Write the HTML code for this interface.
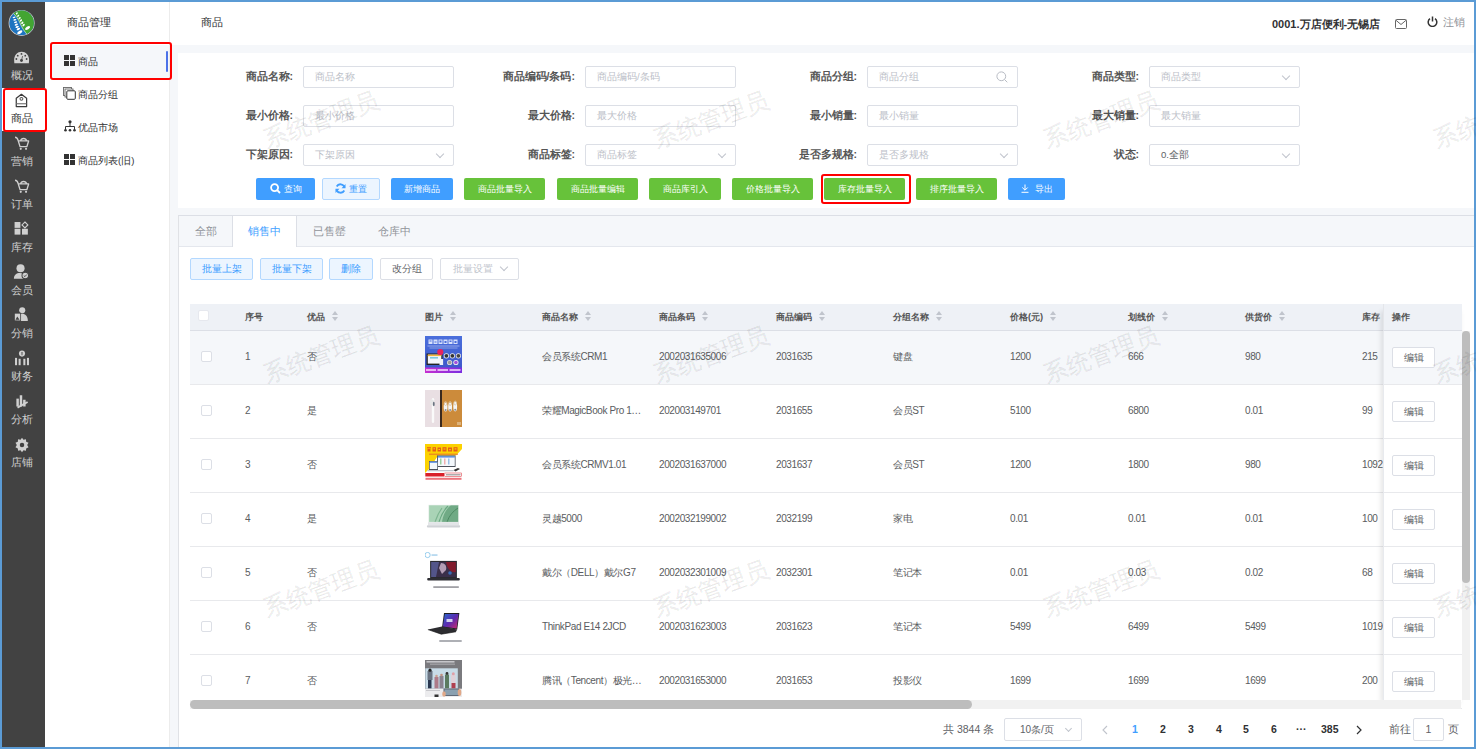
<!DOCTYPE html>
<html><head><meta charset="utf-8"><style>
*{box-sizing:border-box;margin:0;padding:0}
html,body{width:1476px;height:749px;overflow:hidden}
body{font-family:"Liberation Sans",sans-serif;color:#606266;position:relative;background:#5b9bd5}
.a{position:absolute}
.t{position:absolute;white-space:nowrap}
.mi{position:absolute;left:2px;width:43px;height:43px;color:#d0d0d0;font-size:11px;text-align:center}
.mi .tx{position:absolute;left:-2px;width:43px;top:24px;line-height:13px;font-weight:500}
.mi svg{position:absolute;left:11px;top:4px}
.mi.on{background:#fff;color:#333}
.lbl{position:absolute;font-size:10.5px;font-weight:bold;color:#555;text-align:right;line-height:20px;white-space:nowrap}
.inp{position:absolute;width:151px;height:22px;border:1px solid #dcdfe6;border-radius:2px;background:#fff;font-size:9.6px;color:#bcc0c8;line-height:20px;padding-left:11px;white-space:nowrap}
.inp .arr{position:absolute;right:10px;top:6px;width:6px;height:6px;border-right:1px solid #c0c4cc;border-bottom:1px solid #c0c4cc;transform:rotate(45deg)}
.btn{position:absolute;top:178px;height:22px;border-radius:2px;font-size:9.4px;font-weight:500;color:#fff;text-align:center;line-height:22px;white-space:nowrap}
.g{background:#67c23a}
.b{background:#409eff}
.tab{position:absolute;top:216px;height:30px;font-size:11px;color:#909399;line-height:30px;text-align:center}
.tb{position:absolute;top:258px;height:22px;border-radius:2px;font-size:9.6px;line-height:20px;text-align:center;white-space:nowrap}
.tb.p{background:#ecf5ff;border:1px solid #b3d8ff;color:#409eff}
.tb.w{background:#fff;border:1px solid #dcdfe6;color:#606266}
.hc{position:absolute;top:304px;line-height:26px;font-size:9.2px;font-weight:600;color:#555;white-space:nowrap}
.c{position:absolute;font-size:10px;letter-spacing:-0.4px;color:#5a5c60;white-space:nowrap;line-height:14px}
.cb{position:absolute;width:11px;height:11px;border:1px solid #dcdfe6;border-radius:2px;background:#fff}
.sort{display:inline-block;vertical-align:middle;margin-left:7px;width:7px;height:11px;position:relative;top:-1px}
.sort:before{content:"";position:absolute;left:0;top:0;border-left:3.5px solid transparent;border-right:3.5px solid transparent;border-bottom:4px solid #c0c4cc}
.sort:after{content:"";position:absolute;left:0;top:6px;border-left:3.5px solid transparent;border-right:3.5px solid transparent;border-top:4px solid #c0c4cc}
.wm{position:absolute;width:0;height:0}.wm span{position:absolute;left:0;top:0;font-size:24px;line-height:28px;color:rgba(0,0,0,0.065);-webkit-text-stroke:0.9px rgba(0,0,0,0.045);transform:translate(-50%,-50%) rotate(-20deg);white-space:nowrap}
.ed{position:absolute;left:1392px;width:43px;height:21px;border:1px solid #dcdfe6;border-radius:2px;background:#fff;font-size:9.6px;color:#606266;line-height:19px;text-align:center}
.pg{position:absolute;top:722px;font-size:10.5px;font-weight:bold;color:#303133;line-height:14px;white-space:nowrap;text-align:center}
</style></head><body>
<div class="a" style="left:2px;top:2px;width:1472px;height:745px;background:#f5f7fa"></div>
<div class="a" style="left:2px;top:2px;width:43px;height:745px;background:#424242"></div>
<svg class="a" style="left:6px;top:7px" width="32" height="32" viewBox="0 0 32 32">
<circle cx="15.6" cy="15.9" r="13" fill="#d8d4d4"/>
<clipPath id="lc"><circle cx="15.6" cy="15.9" r="12.3"/></clipPath>
<g clip-path="url(#lc)">
<rect x="0" y="0" width="32" height="32" fill="#1d74c0"/>
<path d="M6.5 5.5 C 10 9, 12.5 12, 14 16 C 16 21, 18.5 24.5, 22 28.5 L 32 32 L 32 0 L 0 0 Z" fill="#43a532"/>
<path d="M6.5 5.5 C 10 9, 12.5 12, 14 16 C 16 21, 18.5 24.5, 22 28.5" fill="none" stroke="#cfe8c8" stroke-width="0.8"/>
<g fill="#fff">
<ellipse cx="10.8" cy="6.4" rx="0.8" ry="1.25" transform="rotate(40 10.8 6.4)"/>
<ellipse cx="12.2" cy="8.8" rx="0.8" ry="1.3" transform="rotate(40 12.2 8.8)"/>
<ellipse cx="13.6" cy="11.1" rx="0.85" ry="1.35" transform="rotate(40 13.6 11.1)"/>
<ellipse cx="15" cy="13.4" rx="0.85" ry="1.4" transform="rotate(40 15 13.4)"/>
<ellipse cx="16.3" cy="15.8" rx="0.9" ry="1.45" transform="rotate(40 16.3 15.8)"/>
<ellipse cx="17.6" cy="18.2" rx="0.9" ry="1.5" transform="rotate(40 17.6 18.2)"/>
<ellipse cx="21.6" cy="21" rx="1.4" ry="2.8" transform="rotate(58 21.6 21)"/>
<ellipse cx="8" cy="10.4" rx="0.75" ry="1.4" transform="rotate(75 8 10.4)"/>
<ellipse cx="8.9" cy="12.8" rx="0.8" ry="1.5" transform="rotate(75 8.9 12.8)"/>
<ellipse cx="9.6" cy="15.2" rx="0.85" ry="1.6" transform="rotate(75 9.6 15.2)"/>
<ellipse cx="10.3" cy="17.6" rx="0.9" ry="1.7" transform="rotate(70 10.3 17.6)"/>
<ellipse cx="11.2" cy="19.9" rx="0.95" ry="1.8" transform="rotate(65 11.2 19.9)"/>
<ellipse cx="12.4" cy="22" rx="1" ry="1.9" transform="rotate(62 12.4 22)"/>
<ellipse cx="13.8" cy="25.3" rx="1.4" ry="2.9" transform="rotate(58 13.8 25.3)"/>
</g></g></svg>
<div class="mi" style="top:45px"><svg width="18" height="18" viewBox="0 0 16 16"><path d="M1.2 12.6 L1.0 9.6 C1.0 5.5 4 2.4 7.65 2.4 C11.3 2.4 14.3 5.5 14.3 9.6 L14.1 12.6 Z" fill="#d4d4d4"/><g fill="#424242"><circle cx="7.55" cy="4.4" r="0.8"/><circle cx="4.2" cy="5.9" r="0.8"/><circle cx="10.9" cy="5.9" r="0.8"/><circle cx="3" cy="8.9" r="0.8"/><circle cx="12.1" cy="8.9" r="0.8"/><circle cx="7.55" cy="10.2" r="1.3"/></g><path d="M7.55 10.2 L8.5 6.3" stroke="#424242" stroke-width="0.7"/></svg><div class="tx">概况</div></div>
<div class="mi on" style="top:88px"><svg width="18" height="18" viewBox="0 0 16 16"><path d="M2.9 12.9 V5.6 L7.5 2.1 L12.1 5.6 V12.9 Z" fill="none" stroke="#3a3a3a" stroke-width="1.1" stroke-linejoin="round"/><circle cx="7.5" cy="6.1" r="1.3" fill="none" stroke="#555" stroke-width="0.9"/><path d="M3.2 10.4 H11.8" stroke="#8a8a8a" stroke-width="1.2"/></svg><div class="tx">商品</div></div>
<div class="mi" style="top:131px"><svg width="18" height="18" viewBox="0 0 16 16"><path d="M1.8 2 C3.3 2 4 2.6 4.7 5.3 M4.7 5.3 H13.9 L12.3 10.4 H6.3 Z M6.6 5.3 C7.4 2.4 11.4 2.4 12.2 5.3" fill="none" stroke="#d0d0d0" stroke-width="1.15" stroke-linejoin="round"/><circle cx="6.9" cy="12.3" r="0.95" fill="#d0d0d0"/><circle cx="11.6" cy="12.3" r="0.95" fill="#d0d0d0"/></svg><div class="tx">营销</div></div>
<div class="mi" style="top:174px"><svg width="18" height="18" viewBox="0 0 16 16"><path d="M1.8 2 C3.3 2 4 2.6 4.7 5.3 M4.7 5.3 H13.9 L12.3 10.4 H6.3 Z M6.6 5.3 C7.4 2.4 11.4 2.4 12.2 5.3" fill="none" stroke="#d0d0d0" stroke-width="1.15" stroke-linejoin="round"/><circle cx="6.9" cy="12.3" r="0.95" fill="#d0d0d0"/><circle cx="11.6" cy="12.3" r="0.95" fill="#d0d0d0"/></svg><div class="tx">订单</div></div>
<div class="mi" style="top:217px"><svg width="18" height="18" viewBox="0 0 16 16"><rect x="1.4" y="0.9" width="5.2" height="5.2" fill="#d0d0d0"/><rect x="1.4" y="6.9" width="5.2" height="5.2" fill="#d0d0d0"/><rect x="8" y="6.9" width="5.2" height="5.2" fill="#d0d0d0"/><path d="M10.6 0.9 L13.2 3.5 L10.6 6.1 L8 3.5 Z" fill="none" stroke="#d0d0d0" stroke-width="1"/></svg><div class="tx">库存</div></div>
<div class="mi" style="top:260px"><svg width="18" height="18" viewBox="0 0 16 16"><circle cx="6.7" cy="3.8" r="3.6" fill="#d0d0d0"/><path d="M0.8 13 C0.8 9.5 3 7.9 6.2 7.9 C8.2 7.9 9.6 8.5 10.6 10 L10.6 13 Z" fill="#d0d0d0"/><circle cx="10.9" cy="10.2" r="2.9" fill="#d0d0d0" stroke="#424242" stroke-width="0.9"/><path d="M9.6 10.4 L10.6 11.2 L12.2 9.4" fill="none" stroke="#424242" stroke-width="0.8"/></svg><div class="tx">会员</div></div>
<div class="mi" style="top:303px"><svg width="18" height="18" viewBox="0 0 16 16"><circle cx="8.2" cy="2.9" r="2.7" fill="#d0d0d0"/><path d="M3.5 12.4 C3.5 8 6 6 8.3 6 C10.8 6 13.2 8 13.2 12.4 Z" fill="#d0d0d0"/><rect x="1.2" y="5.5" width="5.6" height="6.8" fill="#d0d0d0" stroke="#424242" stroke-width="0.7"/><path d="M2.2 11.3 L3.8 8.5 L5.8 11.3 Z" fill="#424242"/></svg><div class="tx">分销</div></div>
<div class="mi" style="top:346px"><svg width="18" height="18" viewBox="0 0 16 16"><circle cx="8" cy="3.2" r="2.7" fill="#d0d0d0"/><path d="M7.2 2.2 H8.8 M7.2 3.2 H8.8 M7.2 4.2 H8.8" stroke="#424242" stroke-width="0.5"/><rect x="1.8" y="7" width="1.8" height="6.5" fill="#d0d0d0"/><rect x="5" y="7.8" width="1.8" height="5.7" fill="#d0d0d0"/><rect x="9.2" y="7.8" width="1.8" height="5.7" fill="#d0d0d0"/><rect x="12.4" y="7" width="1.8" height="6.5" fill="#d0d0d0"/></svg><div class="tx">财务</div></div>
<div class="mi" style="top:389px"><svg width="18" height="18" viewBox="0 0 16 16"><rect x="3" y="5" width="2.2" height="7" fill="#d0d0d0"/><rect x="6" y="2" width="2.2" height="10" fill="#d0d0d0"/><rect x="9" y="6" width="2.2" height="6" fill="#d0d0d0"/><path d="M4 13 L13 8" stroke="#d0d0d0" stroke-width="1.6"/></svg><div class="tx">分析</div></div>
<div class="mi" style="top:432px"><svg width="18" height="18" viewBox="0 0 16 16"><path d="M8 1.5 L9.3 3.3 L11.5 2.8 L11.7 5 L13.8 6 L12.6 8 L13.8 10 L11.7 11 L11.5 13.2 L9.3 12.7 L8 14.5 L6.7 12.7 L4.5 13.2 L4.3 11 L2.2 10 L3.4 8 L2.2 6 L4.3 5 L4.5 2.8 L6.7 3.3 Z" fill="#d0d0d0"/><circle cx="8" cy="8" r="2" fill="#424242"/></svg><div class="tx">店铺</div></div>
<div class="a" style="left:45px;top:2px;width:125px;height:745px;background:#fff;border-right:1px solid #ececec"></div>
<div class="t" style="left:67px;top:15px;font-size:11px;color:#303133;line-height:14px">商品管理</div>
<div class="a" style="left:50px;top:45px;width:119px;height:33px;background:#f5f7fa"></div>
<div class="a" style="left:166px;top:51px;width:2px;height:21px;background:#4c72e8;border-radius:1px"></div>
<svg class="a" style="left:64px;top:55px" width="11" height="11" viewBox="0 0 11 11"><rect x="0" y="0" width="5" height="5" fill="#333"/><rect x="6" y="0" width="5" height="5" fill="#333"/><rect x="0" y="6" width="5" height="5" fill="#333"/><rect x="6" y="6" width="5" height="5" fill="#333"/></svg>
<div class="t" style="left:78px;top:55px;font-size:9.5px;font-weight:500;color:#303133;line-height:13px">商品</div>
<svg class="a" style="left:63px;top:87px" width="13" height="13" viewBox="0 0 13 13"><rect x="0.5" y="0.5" width="8" height="8" fill="#fff" stroke="#666" stroke-width="0.9"/><rect x="2" y="2" width="8" height="8" fill="#fff" stroke="#666" stroke-width="0.9"/><rect x="3.8" y="3.8" width="8.5" height="8.5" rx="1" fill="#fff" stroke="#333" stroke-width="1"/></svg>
<div class="t" style="left:78px;top:88px;font-size:9.5px;font-weight:500;color:#303133;line-height:13px">商品分组</div>
<svg class="a" style="left:64px;top:120px" width="12" height="12" viewBox="0 0 12 12"><circle cx="6" cy="1.8" r="1.6" fill="#333"/><path d="M6 3 V6.5 M1.5 9.5 V6.5 H10.5 V9.5" stroke="#333" stroke-width="1" fill="none"/><circle cx="1.5" cy="10.3" r="1.3" fill="#333"/><circle cx="6" cy="10.3" r="1.3" fill="#333"/><circle cx="10.5" cy="10.3" r="1.3" fill="#333"/></svg>
<div class="t" style="left:78px;top:121px;font-size:9.5px;font-weight:500;color:#303133;line-height:13px">优品市场</div>
<svg class="a" style="left:64px;top:154px" width="11" height="11" viewBox="0 0 11 11"><rect x="0" y="0" width="5" height="5" fill="#333"/><rect x="6" y="0" width="5" height="5" fill="#333"/><rect x="0" y="6" width="5" height="5" fill="#333"/><rect x="6" y="6" width="5" height="5" fill="#333"/></svg>
<div class="t" style="left:78px;top:154px;font-size:9.5px;font-weight:500;color:#303133;line-height:13px">商品列表(旧)</div>
<div class="a" style="left:170px;top:2px;width:1304px;height:43px;background:#fff"></div>
<div class="t" style="left:201px;top:15px;font-size:11px;color:#303133;line-height:14px">商品</div>
<div class="t" style="left:1272px;top:17px;font-size:11px;font-weight:bold;color:#303133;line-height:14px">0001.万店便利-无锡店</div>
<svg class="a" style="left:1395px;top:19px" width="12" height="10" viewBox="0 0 12 10"><rect x="0.5" y="0.5" width="11" height="9" rx="1" fill="none" stroke="#666" stroke-width="1"/><path d="M1 1.3 L6 5.5 L11 1.3" fill="none" stroke="#666" stroke-width="1"/></svg>
<svg class="a" style="left:1427px;top:16px" width="11" height="11" viewBox="0 0 11 11"><path d="M3 2.6 A4.3 4.3 0 1 0 8 2.6" fill="none" stroke="#333" stroke-width="1.5"/><path d="M5.5 0.5 V5.5" stroke="#333" stroke-width="1.5"/></svg>
<div class="t" style="left:1443px;top:15px;font-size:11px;color:#909399;line-height:14px">注销</div>
<div class="a" style="left:178px;top:53px;width:1296px;height:155px;background:#fff"></div>
<div class="lbl" style="left:143px;top:66px;width:150px">商品名称:</div>
<div class="inp" style="left:303px;top:66px"><span>商品名称</span></div>
<div class="lbl" style="left:425px;top:66px;width:150px">商品编码/条码:</div>
<div class="inp" style="left:585px;top:66px"><span>商品编码/条码</span></div>
<div class="lbl" style="left:707px;top:66px;width:150px">商品分组:</div>
<div class="inp" style="left:867px;top:66px"><span>商品分组</span><svg class="a" style="right:9px;top:4px" width="12" height="12" viewBox="0 0 12 12"><circle cx="5.3" cy="5.3" r="4.4" fill="none" stroke="#b8bcc4" stroke-width="1"/><path d="M8.5 8.5 L11.3 11.3" stroke="#b8bcc4" stroke-width="1"/></svg></div>
<div class="lbl" style="left:989px;top:66px;width:150px">商品类型:</div>
<div class="inp" style="left:1149px;top:66px"><span>商品类型</span><div class="arr"></div></div>
<div class="lbl" style="left:143px;top:105px;width:150px">最小价格:</div>
<div class="inp" style="left:303px;top:105px"><span>最小价格</span></div>
<div class="lbl" style="left:425px;top:105px;width:150px">最大价格:</div>
<div class="inp" style="left:585px;top:105px"><span>最大价格</span></div>
<div class="lbl" style="left:707px;top:105px;width:150px">最小销量:</div>
<div class="inp" style="left:867px;top:105px"><span>最小销量</span></div>
<div class="lbl" style="left:989px;top:105px;width:150px">最大销量:</div>
<div class="inp" style="left:1149px;top:105px"><span>最大销量</span></div>
<div class="lbl" style="left:143px;top:144px;width:150px">下架原因:</div>
<div class="inp" style="left:303px;top:144px"><span>下架原因</span><div class="arr"></div></div>
<div class="lbl" style="left:425px;top:144px;width:150px">商品标签:</div>
<div class="inp" style="left:585px;top:144px"><span>商品标签</span><div class="arr"></div></div>
<div class="lbl" style="left:707px;top:144px;width:150px">是否多规格:</div>
<div class="inp" style="left:867px;top:144px"><span>是否多规格</span><div class="arr"></div></div>
<div class="lbl" style="left:989px;top:144px;width:150px">状态:</div>
<div class="inp" style="left:1149px;top:144px"><span style="color:#606266">0.全部</span><div class="arr"></div></div>
<div class="btn b" style="left:256px;width:59px"><svg style="vertical-align:-2px;margin-right:3px" width="11" height="11" viewBox="0 0 11 11"><circle cx="4.6" cy="4.6" r="3.5" fill="none" stroke="#fff" stroke-width="1.8"/><path d="M7.2 7.2 L10 10" stroke="#fff" stroke-width="1.9"/></svg>查询</div>
<div class="btn" style="left:322px;width:58px;background:#ecf5ff;border:1px solid #b3d8ff;color:#409eff;line-height:20px"><svg style="vertical-align:-2px;margin-right:3px" width="11" height="11" viewBox="0 0 11 11"><path d="M9.5 4.5 A4.2 4.2 0 0 0 1.7 3.5" fill="none" stroke="#409eff" stroke-width="1.8"/><path d="M1.5 6.5 A4.2 4.2 0 0 0 9.3 7.5" fill="none" stroke="#409eff" stroke-width="1.8"/><path d="M10.5 1 V5.2 H6.5 Z" fill="#409eff"/><path d="M0.5 10 V5.8 H4.5 Z" fill="#409eff"/></svg>重置</div>
<div class="btn b" style="left:391px;width:62px">新增商品</div>
<div class="btn g" style="left:464px;width:81px">商品批量导入</div>
<div class="btn g" style="left:557px;width:81px">商品批量编辑</div>
<div class="btn g" style="left:649px;width:72px">商品库引入</div>
<div class="btn g" style="left:732px;width:81px">价格批量导入</div>
<div class="btn g" style="left:824px;width:81px">库存批量导入</div>
<div class="btn g" style="left:916px;width:81px">排序批量导入</div>
<div class="btn b" style="left:1008px;width:57px"><svg style="vertical-align:-1px;margin-right:6px" width="8" height="9" viewBox="0 0 8 9"><path d="M4 0.5 V6 M1.3 3.5 L4 6.2 L6.7 3.5 M0.5 8.3 H7.5" fill="none" stroke="#fff" stroke-width="1"/></svg>导出</div>
<div class="a" style="left:821px;top:174px;width:90px;height:30px;border:2.5px solid #f00;border-radius:3px"></div>
<div class="a" style="left:178px;top:215px;width:1296px;height:532px;background:#fff;border-left:1px solid #e0e2e6;border-top:1px solid #dcdfe6"></div>
<div class="a" style="left:179px;top:216px;width:1295px;height:31px;background:#f5f7fa;border-bottom:1px solid #e4e7ed"></div>
<div class="tab" style="left:179px;width:54px">全部</div>
<div class="a" style="left:232px;top:216px;width:65px;height:31px;background:#fff;border-left:1px solid #dcdfe6;border-right:1px solid #dcdfe6"></div>
<div class="tab" style="left:233px;width:63px;color:#409eff">销售中</div>
<div class="tab" style="left:297px;width:64px">已售罄</div>
<div class="tab" style="left:361px;width:66px">仓库中</div>
<div class="tb p" style="left:190px;width:63px">批量上架</div>
<div class="tb p" style="left:260px;width:63px">批量下架</div>
<div class="tb p" style="left:329px;width:44px">删除</div>
<div class="tb w" style="left:380px;width:53px">改分组</div>
<div class="tb w" style="left:440px;width:79px;text-align:left;padding-left:12px;color:#c0c4cc">批量设置<div style="position:absolute;right:11px;top:5px;width:6px;height:6px;border-right:1px solid #c0c4cc;border-bottom:1px solid #c0c4cc;transform:rotate(45deg)"></div></div>
<div class="a" style="left:190px;top:304px;width:1272px;height:27px;background:#eef1f6;border-bottom:1px solid #dcdfe6"></div>
<div class="cb" style="left:198px;top:310px;width:11px;height:11px;border-color:#e6e8ee"></div>
<div class="hc" style="left:245px">序号</div>
<div class="hc" style="left:307px">优品<i class="sort"></i></div>
<div class="hc" style="left:425px">图片<i class="sort"></i></div>
<div class="hc" style="left:542px">商品名称<i class="sort"></i></div>
<div class="hc" style="left:659px">商品条码<i class="sort"></i></div>
<div class="hc" style="left:776px">商品编码<i class="sort"></i></div>
<div class="hc" style="left:893px">分组名称<i class="sort"></i></div>
<div class="hc" style="left:1010px">价格(元)<i class="sort"></i></div>
<div class="hc" style="left:1128px">划线价<i class="sort"></i></div>
<div class="hc" style="left:1245px">供货价<i class="sort"></i></div>
<div class="hc" style="left:1362px">库存</div>
<div class="a" style="left:190px;top:331px;width:1272px;height:54px;background:#f5f7fa;border-bottom:1px solid #e8e9ec"></div>
<div class="cb" style="left:201px;top:351px"></div>
<div class="c" style="left:245px;top:350px">1</div>
<div class="c" style="left:307px;top:350px">否</div>
<div class="c" style="left:542px;top:350px">会员系统CRM1</div>
<div class="c" style="left:659px;top:350px">2002031635006</div>
<div class="c" style="left:776px;top:350px">2031635</div>
<div class="c" style="left:893px;top:350px">键盘</div>
<div class="c" style="left:1010px;top:350px">1200</div>
<div class="c" style="left:1128px;top:350px">666</div>
<div class="c" style="left:1245px;top:350px">980</div>
<div class="c" style="left:1362px;top:350px">215</div>
<div class="a" style="left:425px;top:336px;width:37px;height:37px"><svg width="37" height="37" viewBox="0 0 37 37">
<defs><linearGradient id="g1" x1="0" y1="0" x2="0" y2="1"><stop offset="0" stop-color="#4a6fdc"/><stop offset="1" stop-color="#3d55c8"/></linearGradient>
<linearGradient id="g1b" x1="0" y1="0" x2="1" y2="0"><stop offset="0" stop-color="#c62fd0"/><stop offset="1" stop-color="#7a2ee0"/></linearGradient></defs>
<rect width="37" height="37" fill="url(#g1)"/>
<g fill="#e8eeff" opacity="0.9"><rect x="3.5" y="3.5" width="4" height="4.5"/><rect x="8.5" y="3.5" width="4" height="4.5"/><rect x="13.5" y="3.5" width="4" height="4.5"/><rect x="18.5" y="3.5" width="4" height="4.5"/><rect x="23.5" y="3.5" width="4" height="4.5"/><rect x="28.5" y="3.5" width="4" height="4.5"/></g>
<g fill="#4a6fdc"><rect x="4.5" y="4.5" width="2" height="1"/><rect x="9.5" y="5.5" width="2" height="1"/><rect x="14.5" y="4.5" width="2" height="2"/><rect x="19.5" y="5" width="2" height="2"/><rect x="24.5" y="4.5" width="2" height="1.5"/><rect x="29.5" y="5" width="2" height="2"/></g>
<rect x="2.5" y="9.5" width="32" height="1" fill="#b9c6f5" opacity="0.7"/>
<rect x="4.5" y="11.5" width="28" height="1" fill="#b9c6f5" opacity="0.6"/>
<rect x="1.5" y="17.5" width="16" height="11.5" fill="#222"/>
<rect x="2.8" y="18.6" width="13.5" height="9" fill="#f4f6fa"/>
<rect x="2.8" y="18.6" width="13.5" height="1.5" fill="#f2b43a"/>
<rect x="5" y="21" width="8" height="1.6" fill="#7ec8e0"/>
<rect x="14.5" y="23" width="3.6" height="6" fill="#eef1f7"/>
<circle cx="15.3" cy="16" r="3.1" fill="#e8235f"/>
<circle cx="21.4" cy="19.8" r="2.6" fill="#eee"/><circle cx="21.4" cy="19.8" r="1.9" fill="#333"/>
<circle cx="27.4" cy="19.8" r="2.6" fill="#eee"/><circle cx="27.4" cy="19.8" r="1.9" fill="#333"/>
<circle cx="33.4" cy="19.8" r="2.6" fill="#eee"/><circle cx="33.4" cy="19.8" r="1.9" fill="#444"/>
<circle cx="24.6" cy="26.5" r="2.6" fill="#ddd"/><circle cx="24.6" cy="26.5" r="1.8" fill="#999"/>
<circle cx="30.9" cy="26.5" r="2.6" fill="#eee"/><circle cx="30.9" cy="26.5" r="1.8" fill="#a24ee0"/>
<rect y="31.5" width="37" height="5.5" fill="url(#g1b)"/>
<g fill="#f8e0ff" opacity="0.75"><rect x="1" y="33" width="10" height="2"/><rect x="12.5" y="33" width="10.5" height="2"/><rect x="24.5" y="33" width="11" height="2"/></g>
</svg></div>
<div class="a" style="left:190px;top:385px;width:1272px;height:54px;background:#fff;border-bottom:1px solid #e8e9ec"></div>
<div class="cb" style="left:201px;top:405px"></div>
<div class="c" style="left:245px;top:404px">2</div>
<div class="c" style="left:307px;top:404px">是</div>
<div class="c" style="left:542px;top:404px">荣耀MagicBook Pro 1…</div>
<div class="c" style="left:659px;top:404px">202003149701</div>
<div class="c" style="left:776px;top:404px">2031655</div>
<div class="c" style="left:893px;top:404px">会员ST</div>
<div class="c" style="left:1010px;top:404px">5100</div>
<div class="c" style="left:1128px;top:404px">6800</div>
<div class="c" style="left:1245px;top:404px">0.01</div>
<div class="c" style="left:1362px;top:404px">99</div>
<div class="a" style="left:425px;top:390px;width:37px;height:37px"><svg width="37" height="37" viewBox="0 0 37 37">
<rect width="15" height="37" fill="#e9dfe3"/>
<rect x="15" width="22" height="37" fill="#c9873a"/>
<rect x="15" width="2" height="37" fill="#3a2a1e"/>
<rect x="17" width="20" height="37" fill="#d08f3c" opacity="0.5"/>
<rect x="6.8" y="8" width="2.4" height="25" rx="1.2" fill="#fafafa"/>
<ellipse cx="7" cy="12.5" rx="2" ry="3" fill="#e6e6e6"/>
<ellipse cx="8.8" cy="14" rx="0.9" ry="2.3" fill="#6a7380"/>
<g fill="#f4f4f4"><ellipse cx="20.6" cy="17" rx="1.9" ry="4.6"/><ellipse cx="25.1" cy="17" rx="1.9" ry="4.6"/><ellipse cx="30.2" cy="16.5" rx="1.9" ry="4.9"/></g>
<g fill="#8a8f96"><circle cx="20.6" cy="20" r="1"/><circle cx="25.1" cy="20" r="1"/><circle cx="30.2" cy="19.8" r="1"/></g>
<g fill="none" stroke="#d9c3a0" stroke-width="0.8"><ellipse cx="20.6" cy="13.5" rx="1.3" ry="2"/><ellipse cx="25.1" cy="13.5" rx="1.3" ry="2"/><ellipse cx="30.2" cy="13" rx="1.3" ry="2"/></g>
<rect x="32" y="32" width="4" height="3" fill="#e8cfa6" opacity="0.6"/>
</svg></div>
<div class="a" style="left:190px;top:439px;width:1272px;height:54px;background:#fff;border-bottom:1px solid #e8e9ec"></div>
<div class="cb" style="left:201px;top:459px"></div>
<div class="c" style="left:245px;top:458px">3</div>
<div class="c" style="left:307px;top:458px">否</div>
<div class="c" style="left:542px;top:458px">会员系统CRMV1.01</div>
<div class="c" style="left:659px;top:458px">2002031637000</div>
<div class="c" style="left:776px;top:458px">2031637</div>
<div class="c" style="left:893px;top:458px">会员ST</div>
<div class="c" style="left:1010px;top:458px">1200</div>
<div class="c" style="left:1128px;top:458px">1800</div>
<div class="c" style="left:1245px;top:458px">980</div>
<div class="c" style="left:1362px;top:458px">1092</div>
<div class="a" style="left:425px;top:444px;width:37px;height:37px"><svg width="37" height="37" viewBox="0 0 37 37">
<rect width="37" height="37" fill="#fff"/>
<path d="M0 0 H37 V5 L31 11.5 H13 L5 24 L0 29 Z" fill="#fcd200"/>
<g fill="#e0401e" opacity="0.8"><rect x="2" y="3.2" width="4" height="1.2"/><rect x="2.5" y="5" width="3" height="2.5"/><rect x="7.5" y="3.2" width="3.5" height="4.3"/><rect x="12.5" y="3.5" width="3.5" height="4"/><rect x="17.5" y="3.2" width="4" height="4.3"/><rect x="23" y="3.5" width="4" height="4"/><rect x="28.5" y="3.2" width="4" height="4.3"/></g><g fill="#fcd200"><rect x="8.5" y="4.3" width="1.5" height="1"/><rect x="13.5" y="5" width="1.5" height="1"/><rect x="18.5" y="4.5" width="2" height="1"/><rect x="24" y="5.2" width="2" height="1"/><rect x="29.5" y="4.3" width="2" height="1.2"/></g>
<rect x="4" y="9.6" width="29" height="1.3" fill="#e8782a" opacity="0.8"/>
<rect x="12" y="11.5" width="18.5" height="11.5" fill="#3a3f4a"/>
<rect x="12.8" y="12.3" width="17" height="9.8" fill="#f4f8fc"/>
<rect x="12.8" y="12.3" width="17" height="1.2" fill="#3b7be0"/>
<rect x="15" y="14.5" width="1.5" height="6" fill="#9ad0a0"/><rect x="19" y="14.5" width="1.5" height="6" fill="#f0b0b0"/><rect x="23" y="14.5" width="1.5" height="6" fill="#9ac0e8"/>
<rect x="4" y="17" width="9" height="9" fill="#4a4f5a"/>
<rect x="4.7" y="17.7" width="7.6" height="7.3" fill="#f4f8fc"/>
<rect x="4.7" y="17.7" width="7.6" height="1" fill="#3b7be0"/>
<rect x="2.5" y="26" width="26" height="1.3" fill="#bfc4cc"/>
<path d="M28.5 26 L33 24 L35 25 L30.5 27.5 Z" fill="#333"/>
<rect x="0.3" y="29" width="18.8" height="3.5" fill="#d9202a"/>
<rect x="19.8" y="29" width="16.9" height="3.5" fill="#fff" stroke="#d9202a" stroke-width="0.5"/>
<rect x="21" y="30.2" width="14.5" height="1.2" fill="#999"/>
<rect x="0.5" y="33.8" width="36" height="2" fill="#e8505a" opacity="0.8"/>
</svg></div>
<div class="a" style="left:190px;top:493px;width:1272px;height:54px;background:#fff;border-bottom:1px solid #e8e9ec"></div>
<div class="cb" style="left:201px;top:513px"></div>
<div class="c" style="left:245px;top:512px">4</div>
<div class="c" style="left:307px;top:512px">是</div>
<div class="c" style="left:542px;top:512px">灵越5000</div>
<div class="c" style="left:659px;top:512px">2002032199002</div>
<div class="c" style="left:776px;top:512px">2032199</div>
<div class="c" style="left:893px;top:512px">家电</div>
<div class="c" style="left:1010px;top:512px">0.01</div>
<div class="c" style="left:1128px;top:512px">0.01</div>
<div class="c" style="left:1245px;top:512px">0.01</div>
<div class="c" style="left:1362px;top:512px">100</div>
<div class="a" style="left:425px;top:498px;width:37px;height:37px"><svg width="37" height="37" viewBox="0 0 37 37">
<rect width="37" height="37" fill="#fff"/>
<rect x="3.8" y="7" width="29.7" height="17.2" fill="#a9d3b6"/>
<path d="M17 24 C18 16 22 10 26 7 L33.5 7 L33.5 24 Z" fill="#5e9c74" opacity="0.75"/>
<path d="M10 24 C12 18 14 14 17 10" stroke="#7db590" stroke-width="1.2" fill="none"/>
<path d="M14 24 C16 17 19 12 23 8" stroke="#6aa882" stroke-width="1.2" fill="none"/>
<path d="M22 24 C24 18 28 13 33 10" stroke="#4d8a63" stroke-width="1" fill="none"/>
<rect x="3.8" y="7" width="29.7" height="17.2" fill="none" stroke="#eef2f0" stroke-width="0.6"/>
<rect x="3" y="24.2" width="31" height="3" fill="#e3e5e8"/>
<rect x="1.9" y="27.2" width="33.2" height="2.3" rx="1" fill="#cfd2d6"/>
</svg></div>
<div class="a" style="left:190px;top:547px;width:1272px;height:54px;background:#fff;border-bottom:1px solid #e8e9ec"></div>
<div class="cb" style="left:201px;top:567px"></div>
<div class="c" style="left:245px;top:566px">5</div>
<div class="c" style="left:307px;top:566px">否</div>
<div class="c" style="left:542px;top:566px">戴尔（DELL）戴尔G7</div>
<div class="c" style="left:659px;top:566px">2002032301009</div>
<div class="c" style="left:776px;top:566px">2032301</div>
<div class="c" style="left:893px;top:566px">笔记本</div>
<div class="c" style="left:1010px;top:566px">0.01</div>
<div class="c" style="left:1128px;top:566px">0.03</div>
<div class="c" style="left:1245px;top:566px">0.02</div>
<div class="c" style="left:1362px;top:566px">68</div>
<div class="a" style="left:425px;top:552px;width:37px;height:37px"><svg width="37" height="37" viewBox="0 0 37 37">
<rect width="37" height="37" fill="#fff"/>
<circle cx="2.6" cy="3" r="2.6" fill="none" stroke="#7cc0e8" stroke-width="0.8"/>
<rect x="6.5" y="2.4" width="6" height="1.3" fill="#9ccbea"/>
<rect x="5.1" y="8.9" width="26.8" height="17.2" fill="#2a2a30"/>
<rect x="6.2" y="10" width="24.6" height="15" fill="#3a2f4a"/>
<path d="M6.2 10 H14 L11 25 H6.2 Z" fill="#5a5f9a" opacity="0.8"/>
<path d="M16 11 C20 11 22 14 21 18 L17 22 L14 16 Z" fill="#c8b0c8" opacity="0.85"/>
<path d="M21 10 H30.8 V20 C27 21 24 18 22 14 Z" fill="#8a1a2a" opacity="0.9"/>
<circle cx="25" cy="21" r="1.8" fill="#3a7ad0" opacity="0.8"/>
<rect x="2.2" y="26.1" width="32.6" height="2.3" rx="1" fill="#2e2e34"/>
<rect x="8.3" y="34.2" width="25.5" height="1.8" fill="#8a8a90" opacity="0.8"/>
</svg></div>
<div class="a" style="left:190px;top:601px;width:1272px;height:54px;background:#fff;border-bottom:1px solid #e8e9ec"></div>
<div class="cb" style="left:201px;top:621px"></div>
<div class="c" style="left:245px;top:620px">6</div>
<div class="c" style="left:307px;top:620px">否</div>
<div class="c" style="left:542px;top:620px">ThinkPad E14 2JCD</div>
<div class="c" style="left:659px;top:620px">2002031623003</div>
<div class="c" style="left:776px;top:620px">2031623</div>
<div class="c" style="left:893px;top:620px">笔记本</div>
<div class="c" style="left:1010px;top:620px">5499</div>
<div class="c" style="left:1128px;top:620px">6499</div>
<div class="c" style="left:1245px;top:620px">5499</div>
<div class="c" style="left:1362px;top:620px">1019</div>
<div class="a" style="left:425px;top:606px;width:37px;height:37px"><svg width="37" height="37" viewBox="0 0 37 37">
<rect width="37" height="37" fill="#fff"/>
<defs><linearGradient id="g6" x1="0" y1="0" x2="1" y2="1"><stop offset="0" stop-color="#2a6ad0"/><stop offset="0.5" stop-color="#5a2ab0"/><stop offset="1" stop-color="#d02a6a"/></linearGradient></defs>
<path d="M19 7 L34.4 7 L32.2 23.6 L17 21.4 Z" fill="#1e1e22"/>
<path d="M19.8 8 L33.5 8 L31.6 22.5 L17.9 20.6 Z" fill="url(#g6)"/>
<rect x="21.5" y="13" width="6" height="3" fill="#e8eefc" opacity="0.85"/>
<path d="M2.9 23.6 L17 20.4 L32.2 23.6 L31 25.8 L16.3 28.2 Z" fill="#2c2c30"/>
<path d="M2.9 23.6 L16.3 28.2 L31 25.8" fill="none" stroke="#111" stroke-width="0.6"/>
<rect x="14.3" y="34" width="22.4" height="2" fill="#9a9ca2" opacity="0.8"/>
</svg></div>
<div class="a" style="left:190px;top:655px;width:1272px;height:54px;background:#fff;border-bottom:1px solid #e8e9ec"></div>
<div class="cb" style="left:201px;top:675px"></div>
<div class="c" style="left:245px;top:674px">7</div>
<div class="c" style="left:307px;top:674px">否</div>
<div class="c" style="left:542px;top:674px">腾讯（Tencent）极光…</div>
<div class="c" style="left:659px;top:674px">2002031653000</div>
<div class="c" style="left:776px;top:674px">2031653</div>
<div class="c" style="left:893px;top:674px">投影仪</div>
<div class="c" style="left:1010px;top:674px">1699</div>
<div class="c" style="left:1128px;top:674px">1699</div>
<div class="c" style="left:1245px;top:674px">1699</div>
<div class="c" style="left:1362px;top:674px">200</div>
<div class="a" style="left:425px;top:660px;width:37px;height:37px"><svg width="37" height="37" viewBox="0 0 37 37">
<rect width="37" height="37" fill="#7a7a7e"/>
<rect x="1.5" y="1" width="28" height="1.6" fill="#d8d8dc" opacity="0.8"/>
<rect x="5" y="3.6" width="25" height="1.1" fill="#b8b8bc" opacity="0.8"/>
<rect x="0.3" y="8.3" width="32.5" height="20.4" fill="#c8dce8"/>
<rect x="2.5" y="11" width="5" height="9" fill="#6a7482"/>
<rect x="3" y="20" width="3.5" height="8.5" fill="#2a3850"/>
<circle cx="5" cy="10.2" r="1.6" fill="#222"/>
<rect x="9.5" y="17" width="4" height="11.5" fill="#a86a78" opacity="0.85"/>
<circle cx="11.5" cy="16" r="1.3" fill="#c8a090"/>
<rect x="14.5" y="16" width="4" height="12.5" fill="#8a8290"/>
<circle cx="16.5" cy="15" r="1.3" fill="#c09080"/>
<rect x="20" y="14.5" width="4" height="14" fill="#5a7a60"/>
<circle cx="22" cy="13.5" r="1.4" fill="#333"/>
<rect x="26" y="15" width="4.5" height="8" fill="#e0d0d8"/>
<rect x="26.5" y="23" width="4" height="5.5" fill="#b04050"/>
<circle cx="28.3" cy="13.8" r="1.5" fill="#e0a0a8"/>
<rect x="0" y="28.7" width="37" height="8.3" fill="#ececee"/>
<rect x="1" y="30" width="14" height="1" fill="#c8c8cc"/>
<rect x="18.5" y="28.5" width="15.5" height="7.5" fill="#606a78"/>
<rect x="19.5" y="29.5" width="13.5" height="5.5" fill="#8aa0b0"/>
<ellipse cx="19" cy="34" rx="1.8" ry="2.8" fill="#e0a888"/>
<ellipse cx="34.5" cy="32.5" rx="1.8" ry="3.5" fill="#e0a888"/>
<rect x="9.5" y="34.5" width="4" height="2.5" fill="#333"/>
</svg></div>
<div class="a" style="left:1383px;top:310px;width:79px;height:392px;box-shadow:-2px 1px 5px rgba(0,0,0,0.10)"></div>
<div class="a" style="left:1383px;top:304px;width:79px;height:27px;background:#eef1f6;border-bottom:1px solid #dcdfe6;border-left:1px solid #e4e6ea"></div>
<div class="a" style="left:1383px;top:331px;width:79px;height:54px;background:#f5f7fa;border-bottom:1px solid #e8e9ec;border-left:1px solid #e8eaee"></div>
<div class="ed" style="top:347px">编辑</div>
<div class="a" style="left:1383px;top:385px;width:79px;height:54px;background:#fff;border-bottom:1px solid #e8e9ec;border-left:1px solid #e8eaee"></div>
<div class="ed" style="top:401px">编辑</div>
<div class="a" style="left:1383px;top:439px;width:79px;height:54px;background:#fff;border-bottom:1px solid #e8e9ec;border-left:1px solid #e8eaee"></div>
<div class="ed" style="top:455px">编辑</div>
<div class="a" style="left:1383px;top:493px;width:79px;height:54px;background:#fff;border-bottom:1px solid #e8e9ec;border-left:1px solid #e8eaee"></div>
<div class="ed" style="top:509px">编辑</div>
<div class="a" style="left:1383px;top:547px;width:79px;height:54px;background:#fff;border-bottom:1px solid #e8e9ec;border-left:1px solid #e8eaee"></div>
<div class="ed" style="top:563px">编辑</div>
<div class="a" style="left:1383px;top:601px;width:79px;height:54px;background:#fff;border-bottom:1px solid #e8e9ec;border-left:1px solid #e8eaee"></div>
<div class="ed" style="top:617px">编辑</div>
<div class="a" style="left:1383px;top:655px;width:79px;height:45px;background:#fff;border-left:1px solid #e8eaee"></div>
<div class="ed" style="top:671px">编辑</div>
<div class="hc" style="left:1392px">操作</div>
<div class="a" style="left:1462px;top:331px;width:8px;height:369px;background:#f1f1f1"></div>
<div class="a" style="left:1462px;top:331px;width:8px;height:252px;background:#bdbdbd;border-radius:4px"></div>
<div class="a" style="left:190px;top:700px;width:1271px;height:9px;background:#f1f1f1"></div>
<div class="a" style="left:190px;top:700px;width:782px;height:9px;background:#bdbdbd;border-radius:4.5px"></div>
<div class="t" style="left:943px;top:722px;font-size:10.5px;color:#606266;line-height:14px">共 3844 条</div>
<div class="a" style="left:1004px;top:718px;width:78px;height:23px;border:1px solid #dcdfe6;border-radius:2px;font-size:10px;color:#606266;line-height:21px;padding-left:15px">10条/页<div style="position:absolute;right:10px;top:7px;width:5px;height:5px;border-right:1px solid #c0c4cc;border-bottom:1px solid #c0c4cc;transform:rotate(45deg)"></div></div>
<svg class="a" style="left:1101px;top:725px" width="8" height="10" viewBox="0 0 8 10"><path d="M6 1 L2 5 L6 9" fill="none" stroke="#c0c4cc" stroke-width="1.1"/></svg>
<div class="pg" style="left:1132px;color:#409eff">1</div>
<div class="pg" style="left:1160px">2</div>
<div class="pg" style="left:1188px">3</div>
<div class="pg" style="left:1216px">4</div>
<div class="pg" style="left:1243px">5</div>
<div class="pg" style="left:1271px">6</div>
<div class="pg" style="left:1296px">···</div>
<div class="pg" style="left:1321px">385</div>
<svg class="a" style="left:1355px;top:725px" width="8" height="10" viewBox="0 0 8 10"><path d="M2 1 L6 5 L2 9" fill="none" stroke="#303133" stroke-width="1.2"/></svg>
<div class="t" style="left:1389px;top:722px;font-size:10.5px;color:#606266;line-height:14px">前往</div>
<div class="a" style="left:1413px;top:718px;width:31px;height:23px;border:1px solid #dcdfe6;border-radius:2px;font-size:10.5px;color:#606266;line-height:21px;text-align:center">1</div>
<div class="t" style="left:1448px;top:722px;font-size:10.5px;color:#606266;line-height:14px">页</div>
<div class="a" style="left:3px;top:88px;width:44px;height:44px;border:2.5px solid #f00;border-radius:3px"></div>
<div class="a" style="left:50px;top:42px;width:122px;height:38px;border:2.5px solid #f00;border-radius:3px"></div>
<div class="wm" style="left:321px;top:120px"><span>系统管理员</span></div>
<div class="wm" style="left:711px;top:120px"><span>系统管理员</span></div>
<div class="wm" style="left:1101px;top:120px"><span>系统管理员</span></div>
<div class="wm" style="left:1491px;top:120px"><span>系统管理员</span></div>
<div class="wm" style="left:321px;top:355px"><span>系统管理员</span></div>
<div class="wm" style="left:711px;top:355px"><span>系统管理员</span></div>
<div class="wm" style="left:1101px;top:355px"><span>系统管理员</span></div>
<div class="wm" style="left:1491px;top:355px"><span>系统管理员</span></div>
<div class="wm" style="left:321px;top:589px"><span>系统管理员</span></div>
<div class="wm" style="left:711px;top:589px"><span>系统管理员</span></div>
<div class="wm" style="left:1101px;top:589px"><span>系统管理员</span></div>
<div class="wm" style="left:1491px;top:589px"><span>系统管理员</span></div>
</body></html>
